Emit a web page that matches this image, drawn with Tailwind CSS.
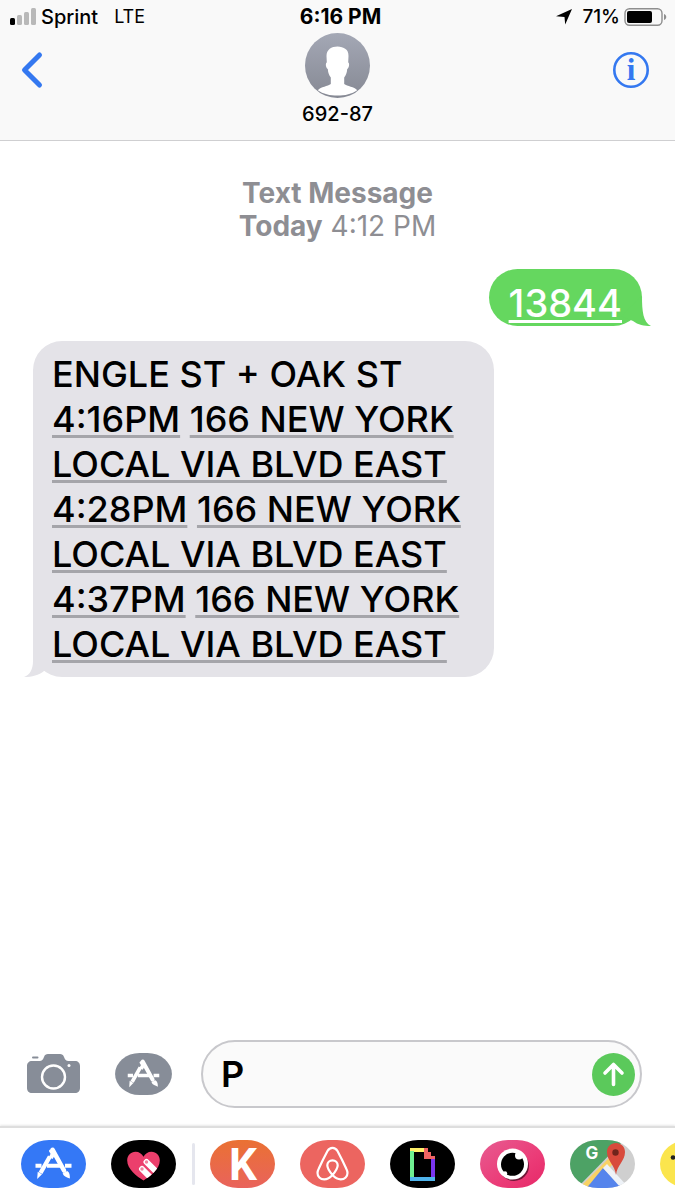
<!doctype html>
<html lang="en">

<head>
    <meta charset="UTF-8">
    <meta name="viewport" content="width=device-width, initial-scale=1.0">
    <title>Messages</title>
    <script src="https://cdn.jsdelivr.net/npm/@tailwindcss/browser@4"></script>
</head>

<body class="min-h-screen flex flex-col bg-white text-black font-['Inter','Liberation_Sans',sans-serif] overflow-x-hidden">
    <header class="bg-[#f9f9f9] border-b border-[#cfcfd1]">
        <!-- status bar -->
        <div class="grid grid-cols-[1fr_auto_1fr] items-center h-[33px] pl-[10px] pr-1 text-[19px] leading-6">
            <div class="flex items-center">
                <svg class="w-[26px] h-[17px]" viewBox="0 0 26 17" aria-hidden="true">
                    <rect x="0" y="10" width="5" height="7" rx="1.5" fill="#000" />
                    <rect x="7" y="7" width="5" height="10" rx="1.5" fill="#b9b9b9" />
                    <rect x="14" y="4" width="5" height="13" rx="1.5" fill="#b9b9b9" />
                    <rect x="21" y="0" width="5" height="17" rx="1.5" fill="#b9b9b9" />
                </svg>
                <span class="ml-[5px] text-[20px] font-medium">Sprint</span>
                <span class="ml-4 text-[18px]">LTE</span>
            </div>
            <div class="text-[21px] font-bold">6:16 PM</div>
            <div class="flex items-center justify-end pr-1">
                <svg class="w-4 h-4 mr-[10px]" viewBox="0 0 16 16" aria-hidden="true">
                    <path d="M16 0 9.200 15.500 8.500 8 0 7.200Z" fill="#000" />
                </svg>
                <span class="font-medium">71%</span>
                <svg class="w-[43px] h-[18px] ml-1" viewBox="0 0 43 18" aria-hidden="true">
                    <rect x="1" y="0.700" width="37" height="16.600" rx="4.500" fill="none" stroke="#8e8e8e" stroke-width="1.400" />
                    <rect x="3" y="3" width="25" height="12" rx="2" fill="#000" />
                    <path d="M40 6c3 1 3 5 0 6z" fill="#8e8e8e" />
                </svg>
            </div>
        </div>
        <!-- contact -->
        <div class="grid grid-cols-[1fr_auto_1fr] items-start h-[107px] px-5">
            <button class="justify-self-start mt-[18px]" aria-label="Back">
                <svg class="w-6 h-[38px]" viewBox="0 0 24 38">
                    <path d="M19.500 4 4.500 19 19.500 34" fill="none" stroke="#3478f0" stroke-width="5" stroke-linecap="round" stroke-linejoin="round" />
                </svg>
            </button>
            <div class="flex flex-col items-center">
                <svg class="w-[65px] h-[65px]" viewBox="0 0 65 65" aria-hidden="true">
                    <defs>
                        <linearGradient id="avatar" x1="0" y1="0" x2="0" y2="1">
                            <stop offset="0" stop-color="#a4a8b5" />
                            <stop offset="1" stop-color="#868994" />
                        </linearGradient>
                    </defs>
                    <circle cx="32.500" cy="32.500" r="32.500" fill="url(#avatar)" />
                    <path d="M32.500 13.500c-6 0-11 3-11 9.500l.3 6.500c-1.500.2-1.200 5.500 1 6.500.3 4 1.200 6 3 8.500v6.500c-3 2.500-10 2.500-13 6.200C18 61 25 62.500 32.500 62.500S47 61 52.200 57.200c-3-3.700-10-3.700-13-6.200v-6.500c1.800-2.500 2.700-4.500 3-8.500 2.200-1 2.500-6.300 1-6.500l.3-6.500c0-3.500-1.200-6.200-3-7-2-1.500-5-2.500-8-2.500z" fill="#fff" />
                </svg>
                <div class="mt-1 text-[20px] leading-6 font-medium">692-87</div>
            </div>
            <button class="justify-self-end mt-[18px] mr-[5px]" aria-label="Details">
                <svg class="w-[38px] h-[38px]" viewBox="0 0 38 38">
                    <circle cx="19" cy="19" r="16.700" fill="none" stroke="#3478f0" stroke-width="2.600" />
                    <text x="19" y="29" text-anchor="middle" class="font-['Liberation_Serif',serif] font-bold text-[31px]" fill="#3478f0">i</text>
                </svg>
            </button>
        </div>
    </header>

    <main class="flex-1 flex flex-col pt-9 pl-[33px] pr-[33px]">
        <div class="text-center text-[28px] leading-[33px] text-[#8e8e93]">
            <p class="font-bold">Text Message</p>
            <p><span class="font-bold">Today</span> 4:12 PM</p>
        </div>

        <!-- sent -->
        <div class="relative self-end mt-[26px] h-[57px] px-5 pt-3 rounded-full bg-[#65d75f] text-white text-[38px] leading-[45px]">
            <svg class="absolute -right-[9px] bottom-0 w-[30px] h-[30px]" viewBox="0 0 30 30" aria-hidden="true">
                <path d="M21 0c0 15 1 26 9 30-7 0-13-1-18-5L0 20z" fill="#65d75f" />
            </svg>
            <a href="#" class="relative font-medium underline decoration-3 underline-offset-3 [text-decoration-skip-ink:none]">13844</a>
        </div>

        <!-- received -->
        <div class="relative self-start mt-[15px] w-full max-w-[461px] pl-[19px] pr-3 pt-[11px] pb-[10px] rounded-[29px] bg-[#e4e3e8] text-[36px] leading-[45px] font-medium">
            <svg class="absolute -left-[9px] bottom-0 w-10 h-[30px]" viewBox="0 0 40 30" aria-hidden="true">
                <path d="M9 0v14c0 8-3 14-9 16 8 0 15-2 20-6l20-4V0z" fill="#e4e3e8" />
            </svg>
            <div class="relative [&_a]:underline [&_a]:decoration-[#a5a5aa] [&_a]:decoration-3 [&_a]:underline-offset-3 [&_a]:[text-decoration-skip-ink:none]">
                <p>ENGLE ST + OAK ST</p>
                <p><a href="#">4:16PM</a> <a href="#">166 NEW YORK LOCAL VIA BLVD EAST</a></p>
                <p><a href="#">4:28PM</a> <a href="#">166 NEW YORK LOCAL VIA BLVD EAST</a></p>
                <p><a href="#">4:37PM</a> <a href="#">166 NEW YORK LOCAL VIA BLVD EAST</a></p>
            </div>
        </div>
    </main>

    <!-- compose -->
    <form class="flex items-center pl-[27px] pr-[33px] pb-[18px]">
        <button type="button" aria-label="Camera">
            <svg class="w-[53px] h-10" viewBox="0 0 53 40">
                <path d="M5 7h7.500c2.500 0 3.500-1.500 4.500-4 .8-2.200 2-3 4-3h12c2 0 3.200.8 4 3 1 2.500 2 4 4.500 4H48c3 0 5 2 5 5v22c0 3-2 5-5 5H5c-3 0-5-2-5-5V12c0-3 2-5 5-5z" fill="#878d98" />
                <path d="M6 3.500h4.500" stroke="#878d98" stroke-width="2" stroke-linecap="round" />
                <circle cx="26.500" cy="23" r="11.500" fill="none" stroke="#fff" stroke-width="2.400" />
                <circle cx="42" cy="11.500" r="1.500" fill="#fff" />
            </svg>
        </button>
        <button type="button" class="ml-[35px]" aria-label="Apps">
            <svg class="w-[57px] h-[42px]" viewBox="0 0 65 48">
                <rect width="65" height="48" rx="28" ry="24" fill="#878d98" />
                <use href="#store" />
            </svg>
        </button>
        <div class="flex-1 flex items-center min-w-0 ml-[29px] h-[68px] pl-[18px] pr-[5px] rounded-full border-2 border-[#c8c8cc] bg-[#fafafa]">
            <input type="text" value="P" aria-label="Text Message" class="flex-1 min-w-0 text-[36px] leading-[45px] font-semibold outline-none">
            <button type="submit" aria-label="Send">
                <svg class="w-[43px] h-[43px]" viewBox="0 0 43 43">
                    <circle cx="21.500" cy="21.500" r="21.500" fill="#5bc95b" />
                    <path d="M21.500 31.500V12M13 20l8.500-8.500L30 20" fill="none" stroke="#fff" stroke-width="3.600" stroke-linecap="round" stroke-linejoin="round" />
                </svg>
            </button>
        </div>
    </form>

    <!-- app drawer -->
    <nav class="flex items-start gap-[25px] h-[74px] pt-3 pl-[21px] border-t-2 border-[#dedede] overflow-hidden shadow-[0_-1px_2px_#e8e8e8]">
        <button class="shrink-0" aria-label="App Store">
            <svg class="w-[65px] h-12" viewBox="0 0 65 48">
                <defs>
                    <g id="store" fill="none" stroke="#fff">
                        <path d="M14.500 25.700h6M26 25.700h13.500M44 25.700h6.500" stroke-width="4" />
                        <path d="M32.500 13 29.800 18M28.900 16.500 19.500 33" stroke-width="4.300" />
                        <path d="M31.600 9.800 43 30.500" stroke-width="4.600" stroke-linecap="round" />
                        <path d="M29.500 11 31.500 14" stroke-width="3" stroke-linecap="round" />
                        <path d="M16.700 31.800 21 34.200 16.200 39z" fill="#fff" stroke="none" />
                        <path d="M41.600 33.500 46.200 31c2.500 1.500 2.700 4 2.700 7.500-3-1.200-6-2-7.300-5z" fill="#fff" stroke="none" />
                    </g>
                </defs>
                <rect width="65" height="48" rx="28" ry="24" fill="#3478f6" />
                <use href="#store" />
            </svg>
        </button>
        <button class="shrink-0" aria-label="Digital Touch">
            <svg class="w-[65px] h-12" viewBox="0 0 65 48">
                <rect width="65" height="48" rx="28" ry="24" fill="#000" />
                <clipPath id="heart">
                    <path d="M32.500 40.500C26 36.500 16.200 29 16.200 20.500c0-5 3.600-8.800 8.300-8.800 3.600 0 6.500 2 8 5 1.500-3 4.400-5 8-5 4.700 0 8.300 3.800 8.300 8.800 0 8.500-9.800 16-16.300 20z" />
                </clipPath>
                <g clip-path="url(#heart)">
                    <rect width="65" height="48" fill="#ec3f6c" />
                    <g stroke="#fff" stroke-width="6" stroke-linecap="round">
                        <path d="M31 29 44 42M35.500 22 50 36.500" />
                    </g>
                    <circle cx="31" cy="29" r="1.700" fill="#f0859f" />
                    <circle cx="35.500" cy="22" r="1.700" fill="#f0859f" />
                </g>
            </svg>
        </button>
        <div class="shrink-0 w-[3px] h-[42px] mt-[3px] -ml-[9px] -mr-[10px] rounded-full bg-[#e5e6ee]"></div>
        <button class="shrink-0" aria-label="Kayak">
            <svg class="w-[65px] h-12" viewBox="0 0 65 48">
                <defs>
                    <linearGradient id="orange" x1="0" y1="0" x2="0" y2="1">
                        <stop offset="0" stop-color="#ea7133" />
                        <stop offset="1" stop-color="#e9635c" />
                    </linearGradient>
                </defs>
                <rect width="65" height="48" rx="28" ry="24" fill="url(#orange)" />
                <text x="33" y="40" text-anchor="middle" fill="#fff" class="font-['Roboto',sans-serif] font-bold text-[44px]">K</text>
            </svg>
        </button>
        <button class="shrink-0" aria-label="Airbnb">
            <svg class="w-[65px] h-12" viewBox="0 0 65 48">
                <rect width="65" height="48" rx="28" ry="24" fill="#ec6560" />
                <path d="M32.500 35C29 31 27.300 28 27.300 25.300c0-3 2.200-5 5.200-5s5.200 2 5.200 5C37.700 28 36 31 32.500 35c-3 3.300-5.500 4.300-8.300 4.300-4 0-6.700-2.900-6.700-6.300 0-1.600.5-2.800 1.200-4.200 2.800-6.200 5.800-12.200 8.800-17.800 1.300-2.300 2.700-3.200 5-3.200s3.700.9 5 3.200c3 5.600 6 11.600 8.800 17.800.7 1.400 1.200 2.600 1.200 4.200 0 3.400-2.700 6.300-6.700 6.300-2.800 0-5.300-1-8.300-4.300z" fill="none" stroke="#fff" stroke-width="2.200" stroke-linejoin="round" />
            </svg>
        </button>
        <button class="shrink-0" aria-label="Giphy">
            <svg class="w-[65px] h-12" viewBox="0 0 65 48" shape-rendering="crispEdges">
                <rect width="65" height="48" rx="28" ry="24" fill="#000" shape-rendering="auto" />
                <path d="M20 8h14v4H20z" fill="#fff06a" />
                <path d="M20 11h4v26h-4z" fill="#6fef91" />
                <path d="M20 37h25v4H20z" fill="#4fb4ec" />
                <path d="M41 19h4v18h-4z" fill="#7a35f0" />
                <path d="M34 8h4v4h3v4h4v3H34z" fill="#ee6462" />
            </svg>
        </button>
        <button class="shrink-0" aria-label="Eye">
            <svg class="w-[65px] h-12" viewBox="0 0 65 48">
                <defs>
                    <linearGradient id="pink" x1="0" y1="0" x2="1" y2="1">
                        <stop offset="0" stop-color="#e75c91" />
                        <stop offset=".6" stop-color="#eb3b77" />
                        <stop offset="1" stop-color="#e62868" />
                    </linearGradient>
                </defs>
                <rect width="65" height="48" rx="28" ry="24" fill="url(#pink)" />
                <circle cx="34" cy="26" r="15" fill="#6f1737" />
                <circle cx="32.500" cy="24" r="15.500" fill="#fff" />
                <circle cx="32.500" cy="24.300" r="11.500" fill="#000" />
                <circle cx="39" cy="15.500" r="4" fill="#fff" />
                <circle cx="25" cy="33.500" r="2.200" fill="#fff" />
            </svg>
        </button>
        <button class="shrink-0" aria-label="Google Maps">
            <svg class="w-[65px] h-12" viewBox="0 0 65 48">
                <clipPath id="pill">
                    <rect width="65" height="48" rx="28" ry="24" />
                </clipPath>
                <g clip-path="url(#pill)">
                    <rect width="65" height="48" fill="#cfcfcf" />
                    <path d="M0 0h54L7 48H0z" fill="#4da265" />
                    <path d="M9 48 40 17l5 5-26 26z" fill="#f8d264" />
                    <path d="M15 50 33 28 55 50z" fill="#5584ec" />
                    <path d="M33 28 37 24 59 48H51z" fill="#eef2f7" />
                    <path d="M46 35C45 25 37 21 37 12c0-5.500 4-9 9-9s9 3.500 9 9c0 9-8 13-9 23z" fill="#d84a3c" />
                    <circle cx="45.500" cy="12.500" r="3.200" fill="#6f241c" />
                </g>
                <text x="22" y="19" text-anchor="middle" fill="#fff" class="font-['Inter',sans-serif] font-bold text-[17px]">G</text>
            </svg>
        </button>
        <button class="shrink-0" aria-label="Stickers">
            <svg class="w-[65px] h-12" viewBox="0 0 65 48">
                <rect width="65" height="48" rx="28" ry="24" fill="#fbe54d" />
                <circle cx="13" cy="17.500" r="2.300" fill="#222" />
                <circle cx="36" cy="17.500" r="2.300" fill="#222" />
                <path d="M17 30c4 6 11 6 15 0" fill="none" stroke="#222" stroke-width="2" stroke-linecap="round" />
            </svg>
        </button>
    </nav>
</body>

</html>
